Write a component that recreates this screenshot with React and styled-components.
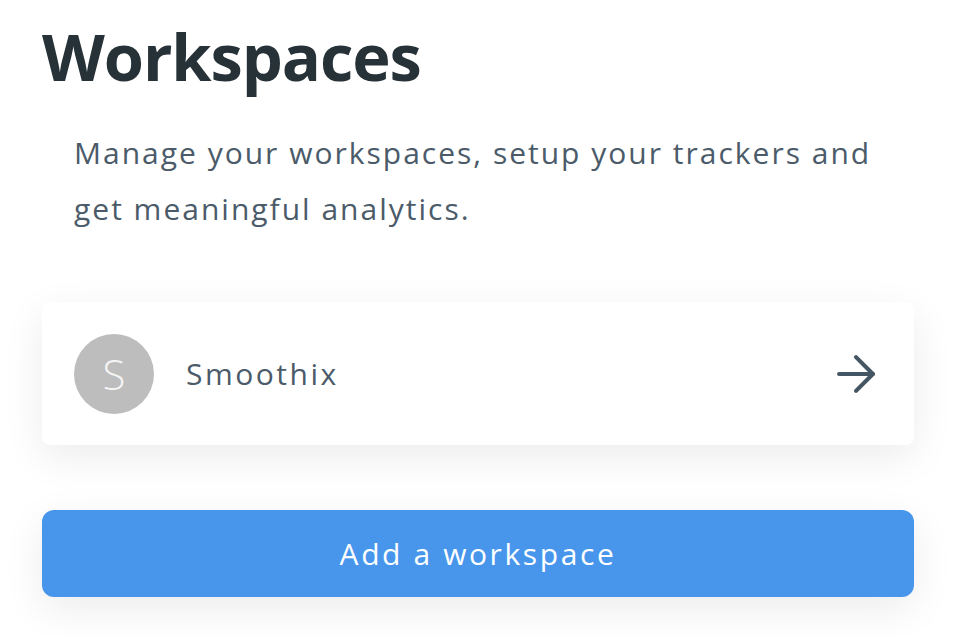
import React from "react";
import styled, { createGlobalStyle } from "styled-components";

const Global = createGlobalStyle`
  html, body { margin: 0; padding: 0; background: #ffffff; }
  body { font-family: "Open Sans", "Noto Sans", sans-serif; }
`;

const Page = styled.div`
  width: 974px;
  height: 636px;
  box-sizing: border-box;
  padding: 18px 60px 0 42px;
  overflow: hidden;
`;

const Title = styled.h1`
  margin: 0;
  font-family: "Open Sans", sans-serif;
  font-weight: 700;
  font-size: 65px;
  line-height: 76px;
  color: #263238;
  letter-spacing: -1.1px;
`;

const Lead = styled.p`
  margin: 31px 0 0;
  padding-left: 32px;
  font-family: "Open Sans", sans-serif;
  font-size: 30px;
  line-height: 56px;
  color: #4b5b69;
  letter-spacing: 2px;
`;

const Card = styled.div`
  margin-top: 65px;
  height: 143px;
  background: #fff;
  border-radius: 8px;
  box-shadow: 0 12px 40px rgba(0, 0, 0, 0.08);
  display: flex;
  align-items: center;
  padding: 0 29px 0 32px;
  box-sizing: border-box;
`;

const Avatar = styled.div`
  width: 80px;
  height: 80px;
  border-radius: 50%;
  background: #bdbdbd;
  color: #f5f5f5;
  display: flex;
  align-items: center;
  justify-content: center;
  font-family: "Open Sans", sans-serif;
  font-weight: 300;
  font-size: 42px;
  flex-shrink: 0;
`;

const Name = styled.div`
  margin-left: 32px;
  flex: 1;
  font-family: "Open Sans", sans-serif;
  font-size: 30px;
  color: #4b5b69;
  letter-spacing: 2.5px;
`;

const Button = styled.button`
  display: block;
  margin-top: 65px;
  width: 100%;
  height: 87px;
  border: none;
  border-radius: 12px;
  background: #4796eb;
  color: #fff;
  font-family: "Open Sans", sans-serif;
  font-size: 30px;
  letter-spacing: 2.6px;
  box-shadow: 0 12px 40px rgba(0, 0, 0, 0.08);
  cursor: pointer;
`;

const Arrow = () => (
  <svg width="58" height="58" viewBox="0 0 24 24" fill="none" stroke="#445563" strokeWidth="1.7" strokeLinecap="round" strokeLinejoin="round">
    <path d="M5 12h14" />
    <path d="m12 5 7 7-7 7" />
  </svg>
);

export default function App() {
  return (
    <>
      <Global />
      <Page>
        <Title>Workspaces</Title>
        <Lead>
          Manage your workspaces, setup your trackers and get meaningful analytics.
        </Lead>
        <Card>
          <Avatar>S</Avatar>
          <Name>Smoothix</Name>
          <Arrow />
        </Card>
        <Button>Add a workspace</Button>
      </Page>
    </>
  );
}
